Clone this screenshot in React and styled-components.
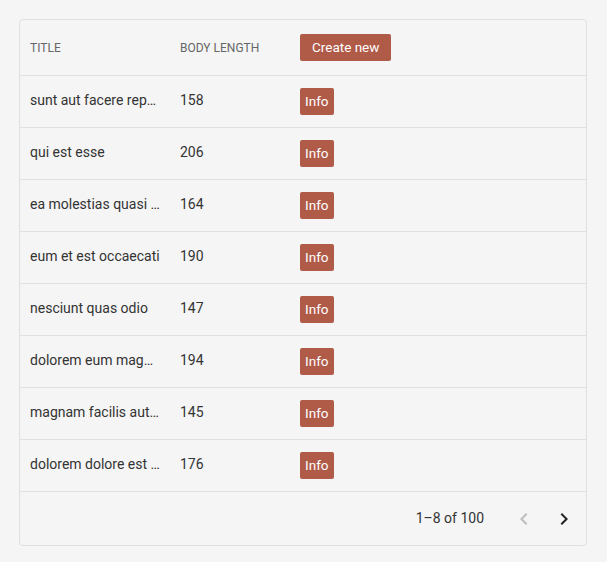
import React from "react";
import styled, { createGlobalStyle } from "styled-components";

const Global = createGlobalStyle`
  html, body { margin: 0; padding: 0; background: #f5f5f5; }
  body { font-family: Roboto, "Liberation Sans", sans-serif; }
`;

const Page = styled.div`
  padding: 19px 20px 16px 19px;
`;

const Card = styled.div`
  border: 1px solid #e0e0e0;
  border-radius: 4px;
  background: #f5f5f5;
  overflow: hidden;
`;

const Row = styled.div`
  display: grid;
  grid-template-columns: 150px 120px 1fr;
  height: ${(p) => (p.$header ? 55 : 51)}px;
  border-bottom: 1px solid #e0e0e0;
  align-items: center;
`;

const Cell = styled.div`
  padding: 0 10px;
  font-size: 14px;
  color: #333333;
  min-width: 0;
  display: flex;
  align-items: center;
`;

const HeaderCell = styled(Cell)`
  font-size: 12px;
  text-transform: uppercase;
  color: #666666;
`;

const Text = styled.span`
  display: block;
  white-space: nowrap;
  overflow: hidden;
  text-overflow: ellipsis;
  padding-bottom: ${(p) => (p.$header ? 0 : 3)}px;
`;

const Button = styled.button`
  background: #b05a48;
  color: #fff;
  border: none;
  border-radius: 2px;
  font-family: Roboto, "Liberation Sans", sans-serif;
  font-size: 13.5px;
  font-weight: 400;
  height: 27px;
  padding: 0 ${(p) => (p.$small ? 5 : 12)}px 1px;
  cursor: pointer;
`;

const Footer = styled.div`
  height: 53px;
  display: flex;
  align-items: center;
  justify-content: flex-end;
  padding-right: 2px;
  font-size: 14px;
  color: #333;
`;

const Count = styled.span`
  margin-right: 20px;
  padding-bottom: 2px;
`;

const Nav = styled.button`
  width: 40px;
  height: 40px;
  border: none;
  background: transparent;
  display: flex;
  align-items: center;
  justify-content: center;
  color: ${(p) => (p.disabled ? "#bdbdbd" : "#222")};
  padding: 0;
`;

const rows = [
  ["sunt aut facere repellat provident", 158],
  ["qui est esse", 206],
  ["ea molestias quasi exercitationem", 164],
  ["eum et est occaecati", 190],
  ["nesciunt quas odio", 147],
  ["dolorem eum magni eos aperiam", 194],
  ["magnam facilis autem", 145],
  ["dolorem dolore est ipsam", 176],
];

const Chevron = ({ dir }) => (
  <svg width="24" height="24" viewBox="0 0 24 24" fill="currentColor">
    {dir === "left" ? (
      <path d="M15.41 7.41 14 6l-6 6 6 6 1.41-1.41L10.83 12z" />
    ) : (
      <path d="M10 6 8.59 7.41 13.17 12l-4.58 4.59L10 18l6-6z" />
    )}
  </svg>
);

export default function App() {
  return (
    <Page>
      <Global />
      <Card>
        <Row $header>
          <HeaderCell><Text $header>Title</Text></HeaderCell>
          <HeaderCell><Text $header>Body length</Text></HeaderCell>
          <Cell>
            <Button>Create new</Button>
          </Cell>
        </Row>
        {rows.map(([t, n]) => (
          <Row key={t}>
            <Cell>
              <Text>{t}</Text>
            </Cell>
            <Cell><Text>{n}</Text></Cell>
            <Cell>
              <Button $small>Info</Button>
            </Cell>
          </Row>
        ))}
        <Footer>
          <Count>1–8 of 100</Count>
          <Nav disabled>
            <Chevron dir="left" />
          </Nav>
          <Nav>
            <Chevron dir="right" />
          </Nav>
        </Footer>
      </Card>
    </Page>
  );
}
